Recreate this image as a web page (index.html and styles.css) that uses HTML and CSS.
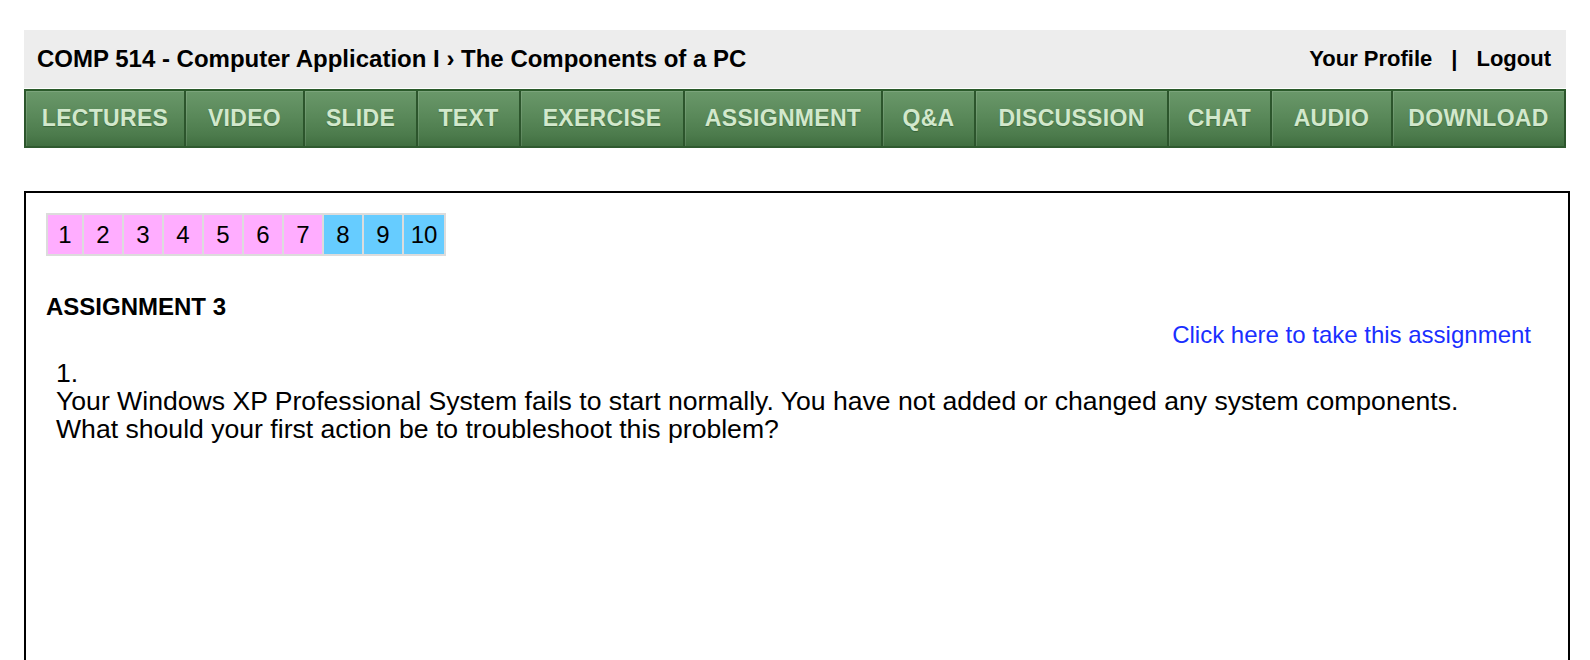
FILE: index.html
```html
<!DOCTYPE html>
<html lang="en">
<head>
<meta charset="utf-8">
<title>COMP 514 - The Components of a PC</title>
<link rel="stylesheet" href="styles.css">
</head>
<body>
<div class="page">
  <header class="topbar">
    <div class="crumb">COMP 514 - Computer Application I › The Components of a PC</div>
    <div class="account"><a href="#">Your Profile</a><span class="sep">|</span><a href="#">Logout</a></div>
  </header>
  <nav class="nav">
    <a href="#">LECTURES</a>
    <a href="#">VIDEO</a>
    <a href="#">SLIDE</a>
    <a href="#">TEXT</a>
    <a href="#">EXERCISE</a>
    <a href="#">ASSIGNMENT</a>
    <a href="#">Q&amp;A</a>
    <a href="#">DISCUSSION</a>
    <a href="#">CHAT</a>
    <a href="#">AUDIO</a>
    <a href="#">DOWNLOAD</a>
  </nav>
</div>
<main class="box">
  <div class="pager">
    <span class="cell pink first">1</span>
    <span class="cell pink">2</span>
    <span class="cell pink">3</span>
    <span class="cell pink">4</span>
    <span class="cell pink">5</span>
    <span class="cell pink">6</span>
    <span class="cell pink">7</span>
    <span class="cell blue">8</span>
    <span class="cell blue">9</span>
    <span class="cell blue last">10</span>
  </div>
  <h2 class="title">ASSIGNMENT 3</h2>
  <div class="take"><a href="#">Click here to take this assignment</a></div>
  <div class="question">
    <div>1.</div>
    <div>Your Windows XP Professional System fails to start normally. You have not added or changed any system components.<br>What should your first action be to troubleshoot this problem?</div>
  </div>
</main>
</body>
</html>
```
FILE: styles.css
```css
html, body {
  margin: 0;
  padding: 0;
  background: #fff;
}
body {
  padding: 30px 0 0 24px;
  font-family: "Liberation Sans", Arial, sans-serif;
  color: #000;
}
.page {
  width: 1542px;
}
.topbar {
  height: 58px;
  background: #ededed;
  display: flex;
  align-items: center;
  justify-content: space-between;
  padding: 0 15px 0 13px;
  font-weight: bold;
}
.crumb {
  font-size: 24px;
}
.account {
  font-size: 22px;
}
.topbar a {
  color: #000;
  text-decoration: none;
}
.account .sep {
  margin: 0 19px;
}
.nav {
  display: grid;
  grid-template-columns: 160px 119px 113px 103px 164px 198px 93px 193px 103px 121px 175px;
  height: 59px;
  margin-top: 1px;
  box-sizing: border-box;
  border-top: 2px solid #2b5a2b;
  border-bottom: 2px solid #2f5a2f;
  background: linear-gradient(#6a986a, #5a895a 45%, #4c7b4c 80%, #406e40);
}
.nav a {
  display: flex;
  align-items: center;
  justify-content: center;
  color: #d2e8cc;
  text-decoration: none;
  font-size: 23px;
  font-weight: bold;
  letter-spacing: 0.3px;
  border-left: 2px solid #2c552c;
  box-shadow: inset 1px 1px 0 rgba(255,255,255,0.12);
  text-shadow: 0 1px 1px rgba(0,40,0,0.3);
}
.nav a:last-child {
  border-right: 2px solid #2c552c;
}
.box {
  margin-top: 43px;
  width: 1546px;
  min-height: 600px;
  box-sizing: border-box;
  border: 2px solid #000;
  padding: 20px;
}
.pager {
  display: inline-flex;
  gap: 2px;
  padding: 2px;
  background: #dcdcdc;
}
.cell {
  width: 38px;
  height: 39px;
  display: flex;
  align-items: center;
  justify-content: center;
  font-size: 24px;
}
.cell.first { width: 34px; }
.cell.last { width: 40px; }
.pink { background: #ffadff; }
.blue { background: #66ccff; }
.title {
  margin: 37px 0 0;
  font-size: 24px;
  font-weight: bold;
  line-height: 28px;
}
.take {
  text-align: right;
  padding-right: 17px;
  font-size: 24px;
  line-height: 28px;
}
.take a {
  color: #1a2fff;
  text-decoration: none;
}
.question {
  margin-top: 10px;
  padding-left: 10px;
  font-size: 26.6px;
  line-height: 28px;
}
```
